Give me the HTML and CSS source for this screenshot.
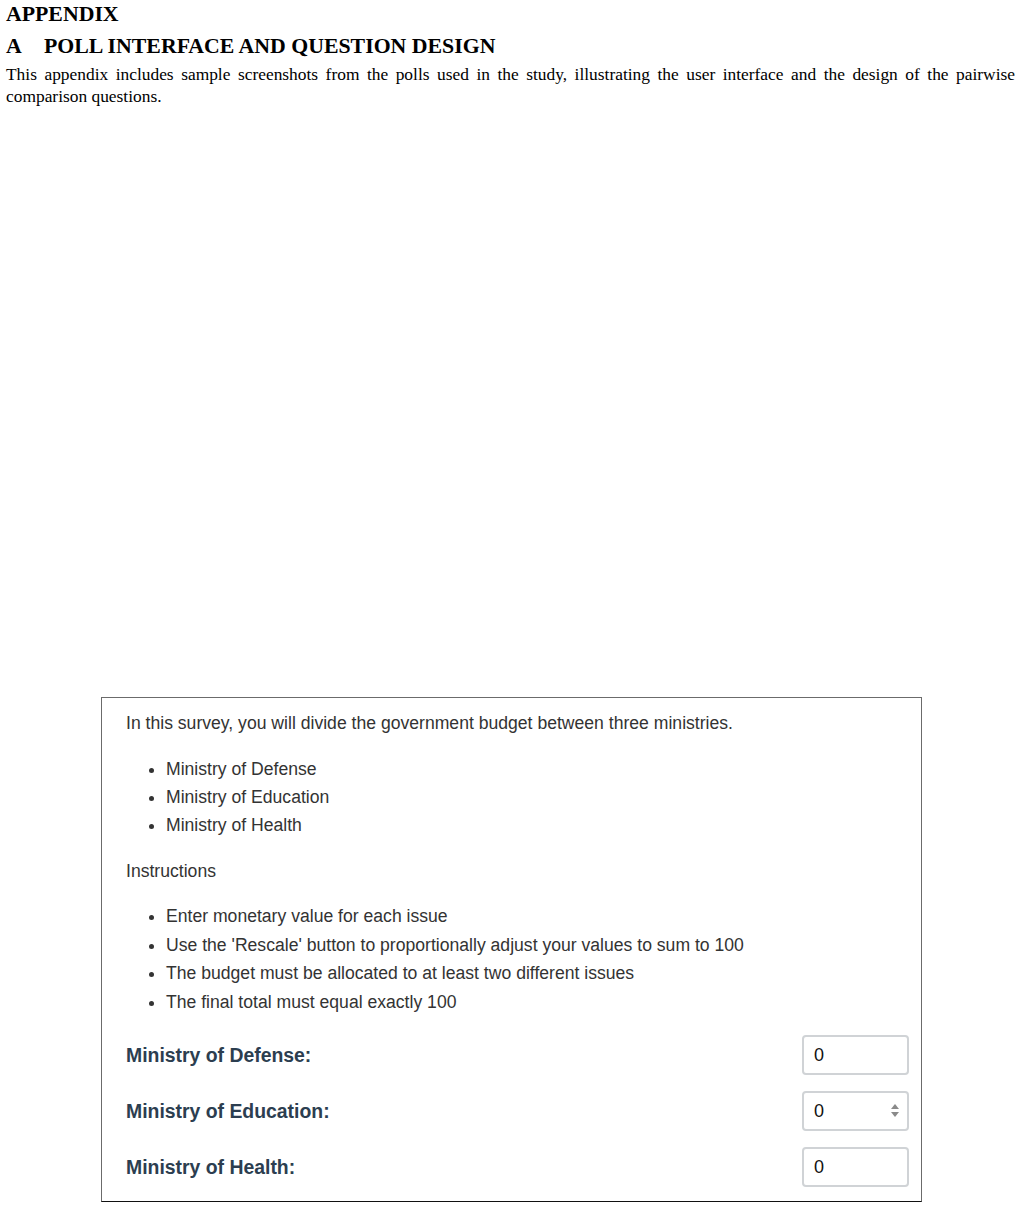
FILE: index.html
```html
<!DOCTYPE html>
<html lang="en">
<head>
  <meta charset="UTF-8">
  <title>Appendix - Poll Interface</title>
  <link rel="stylesheet" href="styles.css">
</head>
<body>

<h1>APPENDIX</h1>
<h2><span class="sec-num">A</span>POLL INTERFACE AND QUESTION DESIGN</h2>
<p class="intro">This appendix includes sample screenshots from the polls used in the study, illustrating the user interface and the design of the pairwise comparison questions.</p>

<div class="poll-box">
  <p>In this survey, you will divide the government budget between three ministries.</p>
  <ul>
    <li>Ministry of Defense</li>
    <li>Ministry of Education</li>
    <li>Ministry of Health</li>
  </ul>
  <p>Instructions</p>
  <ul class="rules">
    <li>Enter monetary value for each issue</li>
    <li>Use the 'Rescale' button to proportionally adjust your values to sum to 100</li>
    <li>The budget must be allocated to at least two different issues</li>
    <li>The final total must equal exactly 100</li>
  </ul>

  <div class="fields">
    <div class="field-row">
      <label>Ministry of Defense:</label>
      <div class="num-box"><input type="text" value="0"></div>
    </div>
    <div class="field-row">
      <label>Ministry of Education:</label>
      <div class="num-box"><input type="text" value="0"><span class="spinner"></span></div>
    </div>
    <div class="field-row">
      <label>Ministry of Health:</label>
      <div class="num-box"><input type="text" value="0"></div>
    </div>
  </div>
</div>

</body>
</html>
```

FILE: styles.css
```css
/* Paper text */
body {
  margin: 0;
  padding: 0 6px;
  font-family: "Liberation Serif", "Times New Roman", serif;
  color: #000;
  background: #fff;
}
h1 {
  font-size: 21.8px;
  margin: 0;
  padding-top: 2px;
  line-height: 24px;
}
h2 {
  font-size: 21.8px;
  margin: 8px 0 0;
  line-height: 24px;
}
.sec-num {
  display: inline-block;
  width: 38px;
}
.intro {
  font-size: 17.4px;
  line-height: 22px;
  margin: 5px 0 0;
  text-align: justify;
}
/* Poll screenshot */
.poll-box {
  width: 821px;
  margin: 590px 0 0 95px;
  border: 1px solid #6b6b6b;
  border-bottom-color: #111;
  padding: 13px 12px 14px 24px;
  box-sizing: border-box;
  font-family: "Liberation Sans", Arial, sans-serif;
  font-size: 17.6px;
  color: #333;
}
.poll-box p {
  margin: 0;
  line-height: 24px;
}
.poll-box ul {
  margin: 20px 0;
  padding-left: 40px;
}
.poll-box li {
  line-height: 28px;
}
.poll-box .rules {
  margin-top: 19px;
}
.poll-box .rules li {
  line-height: 28.5px;
}
/* Inputs */
.fields {
  display: flex;
  flex-direction: column;
  gap: 16px;
  margin-top: -1px;
}
.field-row {
  display: flex;
  justify-content: space-between;
  align-items: center;
}
.field-row label {
  font-weight: bold;
  font-size: 19.4px;
  color: #2c3e50;
}
.num-box {
  position: relative;
}
.num-box input {
  width: 107px;
  height: 40px;
  box-sizing: border-box;
  border: 2px solid #d0d3d6;
  border-radius: 4px;
  padding: 0 10px;
  font-family: "Liberation Sans", Arial, sans-serif;
  font-size: 18px;
  color: #111;
  outline: none;
}
.spinner {
  position: absolute;
  right: 10px;
  top: 13px;
  width: 8px;
  height: 13px;
}
.spinner::before,
.spinner::after {
  content: "";
  position: absolute;
  left: 0;
  border-left: 4px solid transparent;
  border-right: 4px solid transparent;
}
.spinner::before {
  top: 0;
  border-bottom: 5px solid #8a8a8a;
}
.spinner::after {
  bottom: 0;
  border-top: 5px solid #8a8a8a;
}
```
